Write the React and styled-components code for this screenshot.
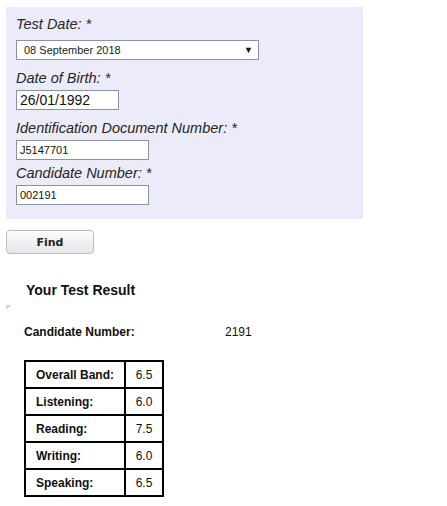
import React from "react";
import styled, { createGlobalStyle } from "styled-components";

const Global = createGlobalStyle`
  body {
    margin: 0;
    background: #fff;
    font-family: "Liberation Sans", Arial, sans-serif;
    color: #222;
  }
`;

const Page = styled.div`
  padding: 7px 0 0 6px;
`;

const Panel = styled.div`
  width: 357px;
  height: 212px;
  box-sizing: border-box;
  background: #ebebfa;
  padding: 8px 0 0 10px;
`;

const Label = styled.div`
  font-style: italic;
  font-size: 14.5px;
  line-height: 18px;
  color: #262626;
  margin-top: ${p => p.gap ?? 9}px;
`;

const Select = styled.div`
  display: flex;
  align-items: center;
  justify-content: space-between;
  box-sizing: border-box;
  width: 243px;
  height: 20px;
  margin-top: 7px;
  background: #fff;
  border: 1px solid #8a93a6;
  padding: 0 5px 0 7px;
  font-size: 11px;
`;

const Arrow = styled.span`
  font-size: 9px;
  color: #111;
`;

const Input = styled.div`
  box-sizing: border-box;
  width: ${p => p.w}px;
  height: 20px;
  margin-top: 3px;
  background: #fff;
  border: 1px solid #8a93a6;
  padding-left: 3px;
  display: flex;
  align-items: center;
  font-size: ${p => p.fs || 11}px;
  color: #111;
`;

const FindButton = styled.button`
  display: block;
  margin-top: 11px;
  width: 88px;
  height: 24px;
  border: 1px solid #b9bcc6;
  border-radius: 4px;
  background: linear-gradient(#fdfdfd, #e4e6ea);
  font-family: "DejaVu Sans", Tahoma, sans-serif;
  font-weight: bold;
  font-size: 11px;
  color: #222;
  padding: 0;
`;

const Title = styled.h3`
  margin: 28px 0 0 20px;
  font-size: 14px;
  line-height: 16px;
  font-weight: bold;
  color: #111;
`;

const Mark = styled.div`
  width: 7px;
  height: 4px;
  margin: 7px 0 0 0;
  background: linear-gradient(135deg, #d4d4d4 50%, transparent 50%);
`;

const InfoRow = styled.div`
  display: flex;
  margin: 16px 0 0 18px;
  font-size: 12px;
  color: #111;
`;

const InfoKey = styled.span`
  font-weight: bold;
  width: 201px;
`;

const Table = styled.table`
  border-collapse: collapse;
  margin: 21px 0 0 18px;
  font-size: 12px;
  color: #111;
`;

const Td = styled.td`
  box-sizing: border-box;
  border: 2px solid #000;
  height: 27px;
  padding: ${p => p.center ? "0" : "0 0 0 10px"};
  white-space: nowrap;
  font-weight: ${p => p.bold ? "bold" : "normal"};
  width: ${p => p.w}px;
  text-align: ${p => p.center ? "center" : "left"};
`;

const scores = [
  ["Overall Band:", "6.5"],
  ["Listening:", "6.0"],
  ["Reading:", "7.5"],
  ["Writing:", "6.0"],
  ["Speaking:", "6.5"],
];

export default function App() {
  return (
    <Page>
      <Global />
      <Panel>
        <Label gap={0}>Test Date: *</Label>
        <Select>
          <span>08 September 2018</span>
          <Arrow>▼</Arrow>
        </Select>
        <Label>Date of Birth: *</Label>
        <Input w={103} fs={14}>26/01/1992</Input>
        <Label>Identification Document Number: *</Label>
        <Input w={133}>J5147701</Input>
        <Label gap={4}>Candidate Number: *</Label>
        <Input w={133}>002191</Input>
      </Panel>
      <FindButton>Find</FindButton>
      <Title>Your Test Result</Title>
      <Mark />
      <InfoRow>
        <InfoKey>Candidate Number:</InfoKey>
        <span>2191</span>
      </InfoRow>
      <Table>
        <tbody>
          {scores.map(([k, v]) => (
            <tr key={k}>
              <Td bold w={100}>{k}</Td>
              <Td center w={38}>{v}</Td>
            </tr>
          ))}
        </tbody>
      </Table>
    </Page>
  );
}
